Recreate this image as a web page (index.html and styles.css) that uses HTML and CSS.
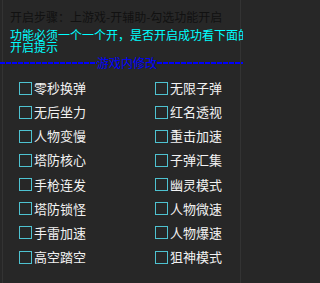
FILE: index.html
```html
<!DOCTYPE html>
<html lang="zh-CN">
<head>
<meta charset="utf-8">
<title>游戏内修改</title>
<link rel="stylesheet" href="styles.css">
</head>
<body>
<div class="frame">
  <div class="header">
    <p class="step">开启步骤：上游戏-开辅助-勾选功能开启</p>
    <p class="note">功能必须一个一个开，是否开启成功看下面的开启提示</p>
  </div>
  <div class="divider">
    <span class="dash left"></span>
    <span class="title">游戏内修改</span>
    <span class="dash right"></span>
  </div>
  <div class="grid">
    <label class="opt"><span class="box"></span>零秒换弹</label>
    <label class="opt"><span class="box"></span>无限子弹</label>
    <label class="opt"><span class="box"></span>无后坐力</label>
    <label class="opt"><span class="box"></span>红名透视</label>
    <label class="opt"><span class="box"></span>人物变慢</label>
    <label class="opt"><span class="box"></span>重击加速</label>
    <label class="opt"><span class="box"></span>塔防核心</label>
    <label class="opt"><span class="box"></span>子弹汇集</label>
    <label class="opt"><span class="box"></span>手枪连发</label>
    <label class="opt"><span class="box"></span>幽灵模式</label>
    <label class="opt"><span class="box"></span>塔防锁怪</label>
    <label class="opt"><span class="box"></span>人物微速</label>
    <label class="opt"><span class="box"></span>手雷加速</label>
    <label class="opt"><span class="box"></span>人物爆速</label>
    <label class="opt"><span class="box"></span>高空踏空</label>
    <label class="opt"><span class="box"></span>狙神模式</label>
  </div>
</div>
</body>
</html>
```

FILE: styles.css
```css
html, body {
  margin: 0;
  padding: 0;
  background: #272727;
  overflow: hidden;
}
body {
  width: 243px;
  height: 283px;
  font-family: "Noto Sans CJK SC", "Noto Sans", sans-serif;
  font-size: 12px;
  line-height: 12px;
}
.frame {
  position: relative;
  height: 283px;
  box-sizing: border-box;
  margin: 0 2px 0 2px;
  border-left: 1px solid #333333;
  border-right: 1px solid #333333;
}
.header {
  padding: 11px 0 0 7px;
}
.step {
  margin: 0;
  color: #111111;
  white-space: nowrap;
}
.note {
  margin: 6px 0 0 0;
  width: 241px;
  color: #00ffff;
}
.divider {
  display: flex;
  align-items: center;
  margin: 4px 0 0 -3px;
  width: 243px;
  height: 12px;
}
.dash {
  height: 2px;
  background: repeating-linear-gradient(to right, #0000ff 0 5px, transparent 5px 6px);
}
.dash.left {
  width: 97px;
}
.dash.right {
  flex: 1;
}
.title {
  color: #0000ff;
  white-space: nowrap;
  width: 60px;
}
.grid {
  display: grid;
  grid-template-columns: 136px 1fr;
  grid-auto-rows: 24.15px;
  padding: 7px 0 0 16px;
}
.opt {
  display: flex;
  align-items: center;
  gap: 2px;
  color: #f2f2f2;
  font-size: 13px;
  letter-spacing: 0;
}
.box {
  width: 13px;
  height: 13px;
  box-sizing: border-box;
  border: 1px solid #4ec2d0;
  flex: none;
}
```
